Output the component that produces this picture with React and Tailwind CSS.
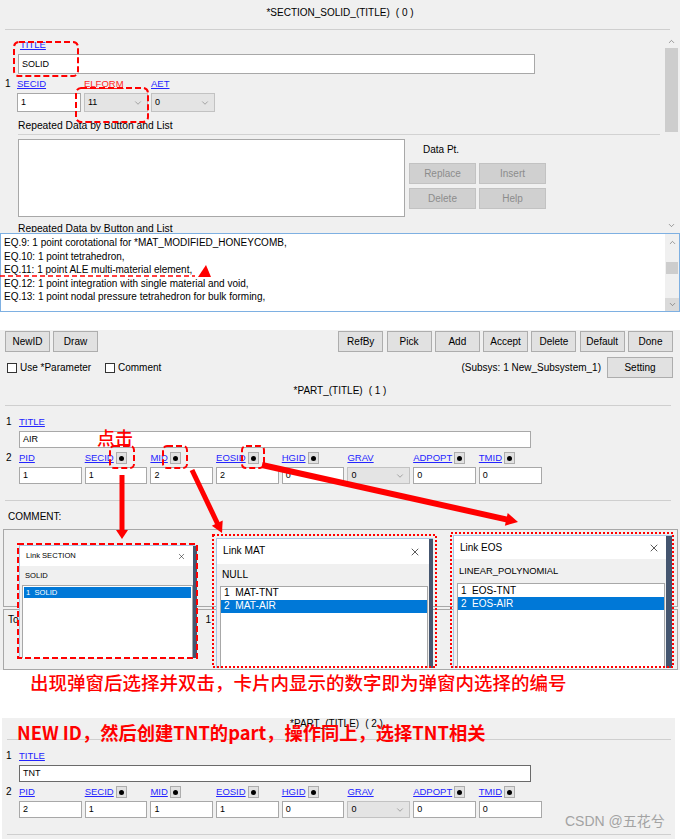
import React from 'react';
import { ChevronDown, ChevronUp, X } from 'lucide-react';

const EQ_LINES = [
  'EQ.9: 1 point corotational for *MAT_MODIFIED_HONEYCOMB,',
  'EQ.10: 1 point tetrahedron,',
  'EQ.11: 1 point ALE multi-material element,',
  'EQ.12: 1 point integration with single material and void,',
  'EQ.13: 1 point nodal pressure tetrahedron for bulk forming,',
];

const PART_FIELDS = [
  { label: 'PID' },
  { label: 'SECID', dot: true },
  { label: 'MID', dot: true },
  { label: 'EOSID', dot: true },
  { label: 'HGID', dot: true },
  { label: 'GRAV', select: true },
  { label: 'ADPOPT', dot: true },
  { label: 'TMID', dot: true },
];

const CMD_BUTTONS = ['RefBy', 'Pick', 'Add', 'Accept', 'Delete', 'Default', 'Done'];

const KLink = ({ children, red }) => (
  <span className={`underline text-[9.5px] ${red ? 'text-[#ff1f1f]' : 'text-[#2424ff]'}`}>{children}</span>
);

const DotBtn = () => (
  <span className="w-[11px] h-[12px] bg-[#e1e1e1] border border-[#adadad] flex items-center justify-center">
    <span className="w-[5px] h-[5px] rounded-full bg-black" />
  </span>
);

const Box = ({ children, dark }) => (
  <div className={`h-full bg-white border flex items-center pl-[3px] text-[9px] ${dark ? 'border-[#6a6a6a]' : 'border-[#a8a8a8]'}`}>
    {children}
  </div>
);

const Select = ({ value }) => (
  <div className="h-full bg-[#e4e4e4] border border-[#c2c2c2] flex items-center justify-between pl-[3px] pr-[4px] text-[9px]">
    <span>{value}</span>
    <ChevronDown size={10} strokeWidth={1.2} className="text-[#606060]" />
  </div>
);

const Btn = ({ children, className = '' }) => (
  <div className={`h-[21px] bg-[#e1e1e1] border border-[#adadad] flex items-center justify-center text-[10px] ${className}`}>
    {children}
  </div>
);

const ScrollArrow = ({ up, className = '' }) => (
  <div className={`flex items-center justify-center ${className}`}>
    {up ? (
      <ChevronUp size={9} strokeWidth={1.6} className="text-[#606060]" />
    ) : (
      <ChevronDown size={9} strokeWidth={1.6} className="text-[#606060]" />
    )}
  </div>
);

// rows of a *PART card: TITLE line + 8 linked fields
function PartRows({ title, values, dark, shift }) {
  return (
    <>
      <div className={`h-[12px] flex items-center ${shift ? 'pl-[4px]' : 'pl-[6px]'}`}>
        <span className="w-[13px] text-[10px]">1</span>
        <KLink>TITLE</KLink>
      </div>
      <div className={`mt-[3px] w-[512px] h-[17px] ${shift ? 'ml-[17px]' : 'ml-[19px]'}`}>
        <Box dark={dark}>{title}</Box>
      </div>
      <div className={`mt-[4px] h-[12px] flex items-center ${shift ? 'pl-[4px]' : 'pl-[6px]'}`}>
        <span className="w-[13px] text-[10px]">2</span>
        <div className="grid grid-cols-[repeat(8,62.7px)] gap-x-[3px]">
          {PART_FIELDS.map((f) => (
            <div key={f.label} className="flex items-center gap-[2px]">
              <KLink>{f.label}</KLink>
              {f.dot && <DotBtn />}
            </div>
          ))}
        </div>
      </div>
      <div className={`mt-[3px] h-[17px] grid grid-cols-[repeat(8,62.7px)] gap-x-[3px] ${shift ? 'ml-[17px]' : 'ml-[19px]'}`}>
        {PART_FIELDS.map((f, i) =>
          f.select ? <Select key={f.label} value={values[i]} /> : <Box key={f.label}>{values[i]}</Box>
        )}
      </div>
    </>
  );
}

function Arrow({ x1, y1, x2, y2, w = 5, head = 12, hw = 13 }) {
  const dx = x2 - x1;
  const dy = y2 - y1;
  const len = Math.hypot(dx, dy);
  const ux = dx / len;
  const uy = dy / len;
  const bx = x2 - ux * head;
  const by = y2 - uy * head;
  const px = (-uy * hw) / 2;
  const py = (ux * hw) / 2;
  return (
    <g>
      <line x1={x1} y1={y1} x2={bx + ux} y2={by + uy} stroke="#ff0000" strokeWidth={w} />
      <polygon points={`${x2},${y2} ${bx + px},${by + py} ${bx - px},${by - py}`} fill="#ff0000" />
    </g>
  );
}

export default function App() {
  return (
    <div className="relative w-[680px] h-[839px] overflow-hidden bg-white text-black text-[10px] leading-none font-['Liberation_Sans','Noto_Sans_CJK_SC',Arial,sans-serif]">
      {/* *SECTION_SOLID keyword panel */}
      <div className="h-[312px] bg-[#f0f0f0] flex flex-col *:shrink-0">
        <div className="h-[29px] flex items-center justify-center pb-[3px] text-[10px] gap-[6px]">
          <span>*SECTION_SOLID_(TITLE)</span>
          <span>( 0 )</span>
        </div>
        <div className="ml-[5px] w-[665px] h-px bg-[#cfcfcf]" />

        <div className="h-[202px] flex">
          <div className="flex-1 overflow-hidden flex flex-col *:shrink-0">
            <div className="mt-[9px] h-[12px] flex items-center ml-[20px]">
              <KLink>TITLE</KLink>
            </div>
            <div className="mt-[3px] ml-[18px] w-[517px] h-[20px]">
              <Box>SOLID</Box>
            </div>
            <div className="mt-[4px] h-[12px] flex items-center pl-[5px]">
              <span className="w-[12px] text-[10px]">1</span>
              <div className="flex items-center gap-[3px]">
                <div className="w-[64px] flex items-center"><KLink>SECID</KLink></div>
                <div className="w-[64px] flex items-center"><KLink red>ELFORM</KLink></div>
                <div className="w-[64px] flex items-center"><KLink>AET</KLink></div>
              </div>
            </div>
            <div className="mt-[3px] h-[19px] ml-[17px] flex gap-[3px]">
              <div className="w-[64px]"><Box>1</Box></div>
              <div className="w-[64px]"><Select value="11" /></div>
              <div className="w-[64px]"><Select value="0" /></div>
            </div>
            <div className="mt-[8px] h-[12px] flex items-center ml-[18px] text-[10.3px]">
              Repeated Data by Button and List
            </div>
            <div className="mt-[2px] ml-[18px] w-[642px] h-px bg-[#d2d2d2]" />
            <div className="mt-[4px] flex">
              <div className="ml-[18px] w-[387px] h-[78px] bg-white border border-[#a8a8a8]" />
              <div className="ml-[4px] flex flex-col">
                <div className="mt-[5px] h-[12px] flex items-center pl-[14px] text-[10px]">Data Pt.</div>
                <div className="mt-[7px] grid grid-cols-[67px_67px] gap-x-[3px] gap-y-[4px]">
                  {['Replace', 'Insert', 'Delete', 'Help'].map((b) => (
                    <div key={b} className="h-[21px] bg-[#d0d0d0] border border-[#c2c2c2] flex items-center justify-center text-[10px] text-[#8c8c8c]">
                      {b}
                    </div>
                  ))}
                </div>
              </div>
            </div>
            <div className="mt-[6px] h-[12px] flex items-center ml-[18px] text-[10.3px]">
              Repeated Data by Button and List
            </div>
          </div>
          <div className="w-[13px] mr-[2px] flex flex-col pt-[4px]">
            <ScrollArrow up className="h-[14px]" />
            <div className="h-[84px] bg-[#cdcdcd]" />
            <div className="flex-1" />
            <ScrollArrow className="h-[14px]" />
          </div>
        </div>

        {/* element formulation help text */}
        <div className="mt-[1px] h-[79px] bg-white border border-[#7eb0e2] flex">
          <div className="flex-1 pt-[2px] pl-[3px] text-[10px] leading-[13.5px]">
            {EQ_LINES.map((l) => (
              <div key={l}>{l}</div>
            ))}
          </div>
          <div className="w-[14px] bg-[#f0f0f0] flex flex-col">
            <ScrollArrow up className="h-[17px]" />
            <div className="mt-[11px] mx-[1px] h-[12px] bg-[#cdcdcd]" />
            <div className="flex-1" />
            <ScrollArrow className="h-[13px] bg-[#dadada]" />
          </div>
        </div>
      </div>

      <div className="h-[18px]" />

      {/* command buttons + *PART card */}
      <div className="h-[340px] bg-[#f0f0f0] flex flex-col *:shrink-0">
        <div className="mt-[1px] flex pl-[5px] pr-[7px]">
          <div className="flex gap-[3px]">
            <Btn className="w-[45px]">NewID</Btn>
            <Btn className="w-[45px]">Draw</Btn>
          </div>
          <div className="ml-auto flex gap-[3.3px]">
            {CMD_BUTTONS.map((b) => (
              <Btn key={b} className="w-[45px]">{b}</Btn>
            ))}
          </div>
        </div>
        <div className="mt-[5px] h-[21px] flex items-center pl-[7px] pr-[7px] text-[10px]">
          <div className="w-[98px] flex items-center gap-[3px]">
            <span className="w-[10px] h-[10px] bg-white border border-[#333]" />
            <span>Use *Parameter</span>
          </div>
          <div className="flex items-center gap-[3px]">
            <span className="w-[10px] h-[10px] bg-white border border-[#333]" />
            <span>Comment</span>
          </div>
          <span className="ml-auto">(Subsys: 1 New_Subsystem_1)</span>
          <Btn className="ml-[6px] w-[66px]">Setting</Btn>
        </div>
        <div className="mt-[7px] h-[12px] flex items-center justify-center gap-[6px] text-[10px]">
          <span>*PART_(TITLE)</span>
          <span>( 1 )</span>
        </div>
        <div className="mt-[8px] ml-[5px] w-[666px] h-px bg-[#cfcfcf]" />
        <div className="mt-[10px]" />
        <PartRows title="AIR" values={['1', '1', '2', '2', '0', '0', '0', '0']} />
        <div className="mt-[16px] ml-[5px] w-[666px] h-px bg-[#cfcfcf]" />
        <div className="mt-[10px] h-[12px] flex items-center pl-[8px] text-[10px]">COMMENT:</div>
        <div className="mt-[6px] ml-[3px] mr-[2px] h-[78px] border border-[#a8a8a8]" />
        <div className="mt-[2px] ml-[3px] mr-[2px] h-[61px] border border-[#a8a8a8] flex items-start pt-[5px] pl-[4px] text-[10px]">
          <span>To</span>
          <span className="ml-[187px]">1</span>
        </div>
      </div>

      <div className="h-[48px]">
        <div className="h-[24px] flex items-center pl-[30px] text-[18.5px] font-medium text-[#ff0000] font-['Noto_Sans_CJK_SC',sans-serif]">
          出现弹窗后选择并双击，卡片内显示的数字即为弹窗内选择的编号
        </div>
      </div>

      {/* second *PART card */}
      <div className="ml-[2px] w-[673px] h-[121px] bg-[#f0f0f0] flex flex-col *:shrink-0">
        <div className="h-[12px] flex items-center justify-center gap-[6px] text-[10px] pr-[4px]">
          <span>*PART_(TITLE)</span>
          <span>( 2 )</span>
        </div>
        <div className="mt-[9px] ml-[5px] w-[664px] h-px bg-[#cfcfcf]" />
        <div className="mt-[10px]" />
        <PartRows title="TNT" dark shift values={['2', '1', '1', '1', '0', '0', '0', '0']} />
        <div className="mt-[16px] ml-[5px] w-[664px] h-px bg-[#cfcfcf]" />
      </div>

      {/* Link popups */}
      <div className="absolute left-[19px] top-[545px] w-[178px] h-[113px] flex border-l border-t border-[#a9c6e6] bg-[#f0f0f0]">
        <div className="flex-1 flex flex-col">
          <div className="h-[20px] bg-white flex items-center justify-between pl-[6px] pr-[7px] text-[7.6px]">
            <span>Link SECTION</span>
            <X size={9} strokeWidth={1.3} />
          </div>
          <div className="h-[19px] flex items-center pl-[5px] text-[7.6px]">SOLID</div>
          <div className="flex-1 ml-[2px] bg-white border-t border-x border-[#a8a8a8] p-px">
            <div className="h-[11px] bg-[#0078d7] text-white flex items-center pl-[2px] text-[7.6px] whitespace-pre">1  SOLID</div>
          </div>
        </div>
        <div className="w-[4px] bg-[#44556f]" />
      </div>

      <div className="absolute left-[216px] top-[538px] w-[217px] h-[130px] flex border-l border-t border-[#a9c6e6] bg-[#f0f0f0]">
        <div className="flex-1 flex flex-col">
          <div className="h-[25px] bg-white flex items-center justify-between pl-[6px] pr-[8px] text-[10.2px]">
            <span>Link MAT</span>
            <X size={12} strokeWidth={1.3} />
          </div>
          <div className="h-[22px] flex items-center pl-[5px] text-[10.2px]">NULL</div>
          <div className="flex-1 ml-[3px] mr-px bg-white border-t border-x border-[#a8a8a8]">
            <div className="h-[13px] flex items-center pl-[3px] text-[10.2px] whitespace-pre">1  MAT-TNT</div>
            <div className="h-[13px] bg-[#0078d7] text-white flex items-center pl-[3px] text-[10.2px] whitespace-pre">2  MAT-AIR</div>
          </div>
        </div>
        <div className="w-[4px] bg-[#44556f]" />
      </div>

      <div className="absolute left-[453px] top-[535px] w-[219px] h-[133px] flex border-l border-t border-[#a9c6e6] bg-[#f0f0f0]">
        <div className="flex-1 flex flex-col">
          <div className="h-[23px] bg-white flex items-center justify-between pl-[6px] pr-[6px] text-[10px]">
            <span>Link EOS</span>
            <X size={12} strokeWidth={1.3} />
          </div>
          <div className="h-[24px] flex items-center pl-[5px] text-[9.4px]">LINEAR_POLYNOMIAL</div>
          <div className="flex-1 ml-[3px] mr-px bg-white border-t border-x border-[#a8a8a8]">
            <div className="h-[13px] flex items-center pl-[3px] text-[10px] whitespace-pre">1  EOS-TNT</div>
            <div className="h-[13px] bg-[#0078d7] text-white flex items-center pl-[3px] text-[10px] whitespace-pre">2  EOS-AIR</div>
          </div>
        </div>
        <div className="w-[6px] bg-[#44556f]" />
      </div>

      {/* red annotations */}
      <svg className="absolute inset-0 pointer-events-none" width="680" height="839">
        <g fill="none" stroke="#ff0000" strokeWidth="2" strokeDasharray="6 3">
          <rect x="14" y="42" width="64" height="34" rx="5" />
          <rect x="76" y="88" width="72" height="34" rx="5" />
          <rect x="110" y="446" width="24" height="22" rx="4" />
          <rect x="163" y="446" width="24" height="22" rx="4" />
          <rect x="242" y="446" width="22" height="22" rx="4" />
          <rect x="18" y="544" width="179" height="114" />
        </g>
        <g fill="none" stroke="#ff0000" strokeWidth="2" strokeDasharray="2 2">
          <rect x="213" y="535" width="223" height="132" />
          <rect x="451" y="533" width="222" height="134" />
        </g>
        <line x1="0" y1="276" x2="195" y2="276" stroke="#ff0000" strokeWidth="1.5" strokeDasharray="5 3" />
        <polygon points="198,277 211,277 206,265" fill="#ff0000" />
        <Arrow x1={122} y1={475} x2={122} y2={539} w={5} head={9} hw={12} />
        <Arrow x1={192} y1={470} x2={222} y2={533} w={5} head={11} hw={12} />
        <Arrow x1={262} y1={465} x2={518} y2={522} w={6} head={12} hw={13} />
      </svg>

      <div className="absolute left-[97px] top-[428px] text-[18px] font-medium text-[#ff0000] font-['Noto_Sans_CJK_SC',sans-serif]">
        点击
      </div>
      <div className="absolute left-[17px] top-[723px] text-[18.3px] font-bold text-[#ff0000] font-['Noto_Sans_CJK_SC',sans-serif]">
        NEW ID，然后创建TNT的part，操作同上，选择TNT相关
      </div>
      <div className="absolute left-[565px] top-[814px] text-[14px] text-[#a3a3a3] font-['Liberation_Sans','Noto_Sans_CJK_SC',sans-serif]">
        CSDN @五花兮
      </div>
    </div>
  );
}
